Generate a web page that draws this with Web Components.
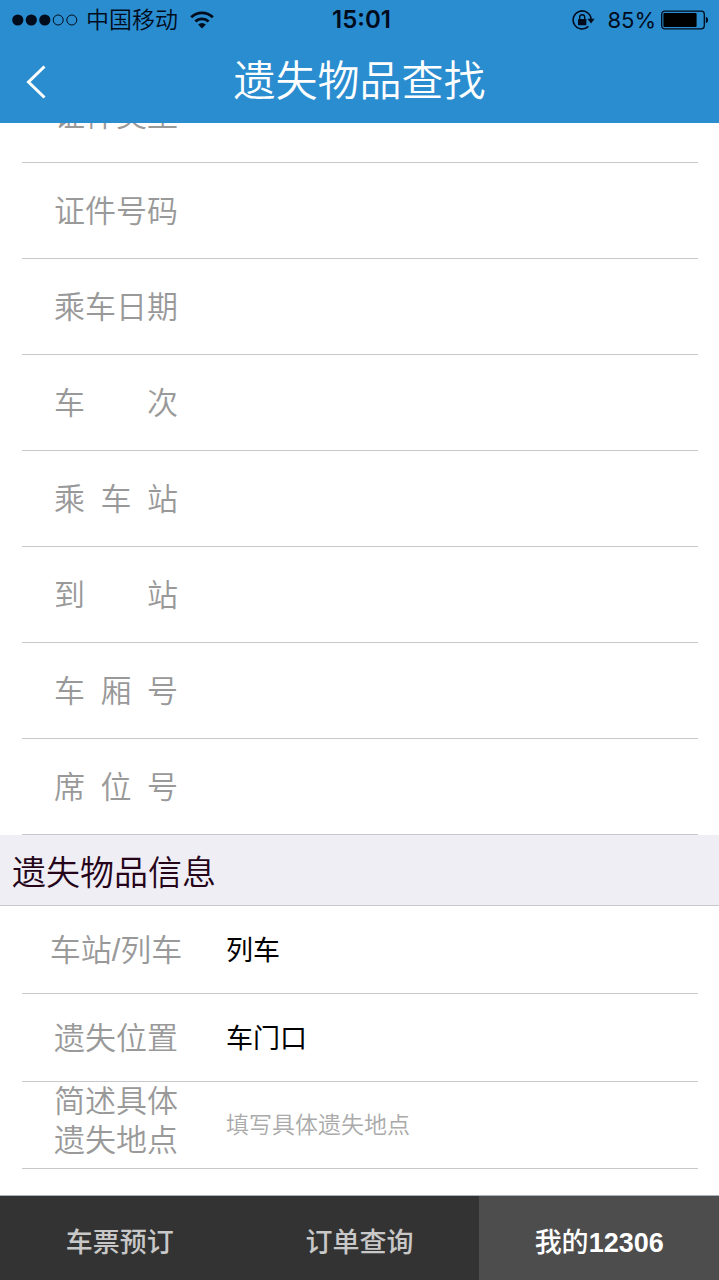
<!DOCTYPE html>
<html lang="zh-CN">
<head>
<meta charset="utf-8">
<meta name="viewport" content="width=device-width, initial-scale=1">
<title>遗失物品查找</title>
<style>
  html, body { height: 100%; margin: 0; }
  body {
    font-family: "Liberation Sans", "Noto Sans CJK SC", sans-serif;
    font-weight: 350;
    color: #000;
    background: #fff;
    --blue: #2a8dd0;
    --line: #c8c7cc;
    --muted: #999;
  }
</style>
</head>
<body>
<lost-app>
  <status-bar slot="top" carrier="中国移动" time="15:01" battery="85%"></status-bar>
  <nav-bar slot="top">遗失物品查找</nav-bar>
  <field-row label="证件类型" name="idtype"></field-row>
  <field-row label="证件号码" name="idno"></field-row>
  <field-row label="乘车日期" name="date"></field-row>
  <field-row label="车 次" name="train"></field-row>
  <field-row label="乘 车 站" name="from"></field-row>
  <field-row label="到 站" name="to"></field-row>
  <field-row label="车 厢 号" name="coach"></field-row>
  <field-row label="席 位 号" name="seat"></field-row>
  <section-title>遗失物品信息</section-title>
  <field-row compact label="车站/列车" name="place" options="列车,车站"></field-row>
  <field-row compact label="遗失位置" name="spot" options="车门口,座位,行李架"></field-row>
  <field-row compact tall label="简述具体遗失地点" name="detail" placeholder="填写具体遗失地点"></field-row>
  <tab-bar slot="bottom">
    <tab-item>车票预订</tab-item>
    <tab-item>订单查询</tab-item>
    <tab-item active>我的<b>12306</b></tab-item>
  </tab-bar>
</lost-app>

<script>
class Base extends HTMLElement {
  connectedCallback() {
    if (this.shadowRoot) return;
    this.attachShadow({ mode: 'open' }).innerHTML = this.template();
    this.ready();
  }
  ready() {}
}

customElements.define('status-bar', class extends Base {
  template() {
    return `
    <style>
      :host { display: grid; grid-template-columns: 1fr auto 1fr; align-items: center;
        height: 40px; padding: 0 10px 0 12px; background: var(--blue); color: #000c1c; font-size: 23px; line-height: 32px; }
      .left, .right { display: flex; align-items: center; }
      .right { justify-content: flex-end; font-family: Inter, sans-serif; font-weight: 400; font-size: 22px; }
      .left { gap: 8px; }
      .wifi { margin-left: 4px; }
      .time { font: 600 24px/32px Inter, sans-serif; padding-left: 2px; }
      .lock { margin-right: 12px; }
      .batt { margin-left: 5px; }
      svg { display: block; flex: none; }
    </style>
    <div class="left">
      <svg width="66" height="12" viewBox="0 0 66 12" aria-hidden="true">
        <g fill="currentColor"><circle cx="5.8" cy="6" r="5.6"/><circle cx="19.3" cy="6" r="5.6"/><circle cx="32.8" cy="6" r="5.6"/></g>
        <g fill="none" stroke="currentColor"><circle cx="46.2" cy="6" r="5"/><circle cx="59.8" cy="6" r="5"/></g>
      </svg>
      <span>${this.getAttribute('carrier')}</span>
      <svg class="wifi" width="24" height="18" viewBox="0 0 24 18" fill="none" stroke="currentColor" stroke-width="2.8" aria-hidden="true">
        <path d="M1.2 6.2a15.5 15.5 0 0 1 21.6 0"/><path d="M5.4 10.6a9.4 9.4 0 0 1 13.2 0"/>
        <path d="M12 17.5l-3.9-4a5.6 5.6 0 0 1 7.8 0z" fill="currentColor" stroke="none"/>
      </svg>
    </div>
    <div class="time">${this.getAttribute('time')}</div>
    <div class="right">
      <svg class="lock" width="23" height="20" viewBox="0 0 23 20" aria-hidden="true">
        <path d="M16.400 16.400a9 9 0 1 1 2.700-7.400" fill="none" stroke="currentColor" stroke-width="1.6"/>
        <path d="M15.200 8.800h7.400l-3.500 4.600z" fill="currentColor"/>
        <rect x="6" y="9" width="8.400" height="6.200" rx="0.600" fill="currentColor"/>
        <path d="M7.700 9.400V7.300a2.500 2.500 0 0 1 5 0v2.100" fill="none" stroke="currentColor" stroke-width="1.4"/>
      </svg>
      <span>${this.getAttribute('battery')}</span>
      <svg class="batt" width="48" height="20" viewBox="0 0 48 20" aria-hidden="true">
        <rect x="0.700" y="1.200" width="42.600" height="17.600" rx="3" fill="none" stroke="currentColor" stroke-width="1.3"/>
        <rect x="2.400" y="3" width="33.200" height="14" rx="1" fill="#000"/>
        <path d="M44.800 6.800c3 .6 3 5.800 0 6.400z" fill="currentColor"/>
      </svg>
    </div>`;
  }
});

customElements.define('nav-bar', class extends Base {
  template() {
    return `
    <style>
      :host { display: grid; grid-template-columns: 72px 1fr 72px; align-items: center;
        height: 83px; background: var(--blue); color: #fff; }
      h1 { margin: 0; text-align: center; font-size: 42px; font-weight: inherit; line-height: 56px; }
      button { height: 83px; padding: 0; border: 0; background: none; color: inherit; display: grid; place-items: center; }
    </style>
    <button type="button" aria-label="返回">
      <svg width="20" height="34" viewBox="0 0 20 34" fill="none" stroke="currentColor" stroke-width="3"><path d="M18.500 1.500L2.500 17l16 15.500"/></svg>
    </button>
    <h1><slot></slot></h1>`;
  }
});

customElements.define('section-title', class extends Base {
  template() {
    return `
    <style>
      :host { display: block; background: #efeef4; border-bottom: 1px solid var(--line); }
      h2 { margin: 0; padding: 6px 12px 0; font-size: 34px; font-weight: inherit; line-height: 64px; color: #25041a; }
    </style>
    <h2><slot></slot></h2>`;
  }
});

customElements.define('field-row', class extends Base {
  template() {
    const { label, name, options, placeholder } = Object.fromEntries([...this.attributes].map(a => [a.name, a.value]));
    const control = options
      ? `<select id="f" name="${name}">${options.split(',').map(o => `<option>${o}</option>`).join('')}</select>`
      : `<input id="f" name="${name}" placeholder="${placeholder || ''}">`;
    return `
    <style>
      :host { display: flex; align-items: center; box-sizing: border-box; height: 96px; margin: 0 21px 0 22px;
        padding: 2px 0 0 24px; gap: 40px; border-bottom: 1px solid var(--line); }
      :host([compact]) { height: 88px; }
      :host([tall]) { height: 87px; padding-top: 0; }
      label { flex: none; box-sizing: border-box; width: 140px; padding: 0 8px; font-size: 31px; line-height: 39px;
        color: var(--muted); text-align-last: justify; white-space: nowrap; }
      :host([options]) label { padding: 0; text-align-last: center; }
      :host([tall]) label { align-self: flex-start; white-space: normal; }
      input, select { flex: 1; min-width: 0; height: 60px; margin: 0; padding: 0; border: 0; outline: 0; background: none;
        appearance: none; font: inherit; font-weight: 400; font-size: 27px; color: #000; }
      input { font-size: 23px; }
      input::placeholder { color: #aaa; opacity: 1; font-weight: 350; }
    </style>
    <label for="f">${label}</label>${control}`;
  }
});

customElements.define('tab-item', class extends Base {
  template() {
    return `
    <style>
      :host { display: block; flex: 1; }
      a { display: block; padding-top: 10px; text-align: center; text-decoration: none; font-size: 27px; font-weight: 500;
        line-height: 74px; color: #c8c8c8; background: #333; }
      :host([active]) a { color: #fff; background: #4d4d4d; }
      ::slotted(b) { font-weight: 700; }
    </style>
    <a href="#"><slot></slot></a>`;
  }
});

customElements.define('tab-bar', class extends Base {
  template() {
    return `
    <style>:host { display: block; border-top: 1px solid #a9b0b8; } nav { display: flex; }</style>
    <nav><slot></slot></nav>`;
  }
});

customElements.define('lost-app', class extends Base {
  template() {
    return `
    <style>
      :host { display: flex; flex-direction: column; height: 100vh; }
      header, footer { flex: none; }
      main { flex: 1; min-height: 0; overflow-y: auto; scrollbar-width: none; }
      form { padding-bottom: 96px; }
    </style>
    <header><slot name="top"></slot></header>
    <main><form><slot></slot></form></main>
    <footer><slot name="bottom"></slot></footer>`;
  }
  ready() {
    /* The form opens scrolled past most of its first row. */
    this.shadowRoot.querySelector('main').scrollTop = 56;
  }
});
</script>
</body>
</html>
